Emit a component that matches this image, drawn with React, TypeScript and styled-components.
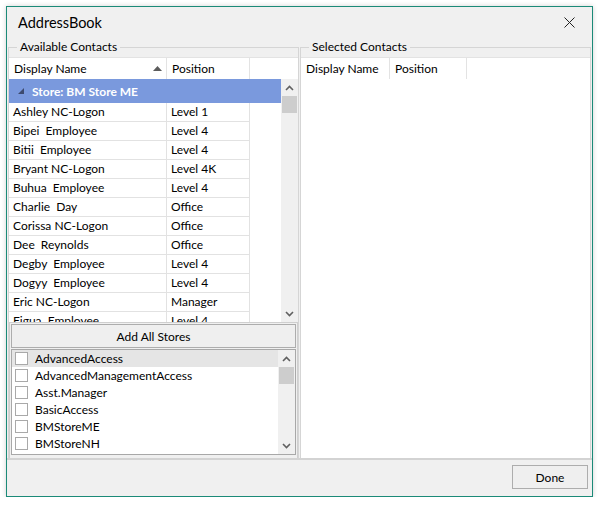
import React from "react";
import styled, { createGlobalStyle } from "styled-components";

const GlobalStyle = createGlobalStyle`
  html, body { margin: 0; padding: 0; background: #ffffff; }
  body {
    font-family: Lato, "Noto Sans", "Liberation Sans", sans-serif;
    font-size: 12px;
    color: #000;
  }
  * { box-sizing: border-box; }
`;

const Window = styled.div`
  margin: 6px 0 0 6px;
  width: 587px;
  height: 491px;
  border: 1px solid #1b8a78;
  background: #f0f0f0;
  display: flex;
  flex-direction: column;
  box-shadow: 0 0 5px rgba(0, 0, 0, 0.18);
`;

const TitleBar = styled.div`
  height: 31px;
  flex: none;
  display: flex;
  align-items: center;
  justify-content: space-between;
`;

const Title = styled.div`
  padding-left: 11px;
  font-size: 14.5px;
  color: #000;
`;

const CloseButton = styled.div`
  width: 46px;
  height: 31px;
  display: flex;
  align-items: center;
  justify-content: center;
`;

const Body = styled.div`
  flex: 1;
  display: flex;
  gap: 1px;
  padding: 0 1px 0 1px;
  min-height: 0;
`;

const Group = styled.fieldset`
  margin: 1px 0 0 0;
  padding: 0;
  width: 291px;
  border: 1px solid #d5d5d5;
  border-bottom: none;
  display: flex;
  flex-direction: column;
  min-width: 0;
`;

const Legend = styled.legend`
  margin-left: 8px;
  padding: 0 3px;
  font-size: 12px;
  line-height: 16px;
  color: #000;
`;

const GroupInner = styled.div`
  flex: 1;
  display: flex;
  flex-direction: column;
  padding-top: 2px;
  min-height: 0;
`;

const Header = styled.div<{ $cols: string }>`
  height: 22px;
  flex: none;
  display: grid;
  grid-template-columns: ${(p) => p.$cols};
  border-top: 1px solid #e3e3e3;
  background: #fff;
`;

const HeaderCell = styled.div`
  display: flex;
  align-items: center;
  justify-content: space-between;
  padding: 0 4px 0 5px;
  border-right: 1px solid #e3e3e3;
  white-space: nowrap;
  overflow: hidden;
  &:last-child { border-right: none; }
`;

const ListBox = styled.div`
  height: 243px;
  flex: none;
  display: flex;
  background: #fff;
`;

const Rows = styled.div`
  flex: 1;
  overflow: hidden;
  display: flex;
  flex-direction: column;
`;

const GroupRow = styled.div`
  height: 24px;
  flex: none;
  background: #7a99dd;
  display: flex;
  align-items: center;
  padding-left: 9px;
  gap: 8px;
  color: #fff;
  font-weight: bold;
`;

const Row = styled.div`
  height: 19px;
  flex: none;
  display: grid;
  grid-template-columns: 158px 83px 1fr;
`;

const Cell = styled.div`
  border-right: 1px solid #e2e2e2;
  border-bottom: 1px solid #e2e2e2;
  padding-left: 4px;
  line-height: 18px;
  white-space: pre;
  overflow: hidden;
`;

const Empty = styled.div``;

const ScrollBar = styled.div`
  width: 17px;
  flex: none;
  background: #f0f0f0;
  display: flex;
  flex-direction: column;
`;

const ScrollBtn = styled.div`
  height: 17px;
  flex: none;
  display: flex;
  align-items: center;
  justify-content: center;
`;

const Thumb = styled.div`
  height: 17px;
  flex: none;
  margin: 0 1px;
  background: #cdcdcd;
`;

const Track = styled.div`
  flex: 1;
`;

const BottomPanel = styled.div`
  flex: 1;
  border: 1px solid #cfcfcf;
  border-bottom: none;
  padding: 1px 1px 0 1px;
  display: flex;
  flex-direction: column;
  gap: 1px;
  min-height: 0;
`;

const PushButton = styled.button`
  height: 24px;
  flex: none;
  border: 1px solid #adadad;
  background: #efefef;
  font-family: inherit;
  font-size: 12px;
  color: #000;
  padding: 0;
`;

const CheckList = styled.div`
  height: 106px;
  flex: none;
  border: 1px solid #a8a8a8;
  background: #fff;
  display: flex;
`;

const CheckItem = styled.div<{ $hot?: boolean }>`
  height: 17px;
  flex: none;
  display: flex;
  align-items: center;
  gap: 7px;
  padding-left: 3px;
  background: ${(p) => (p.$hot ? "#e5e5e5" : "transparent")};
  white-space: nowrap;
`;

const Box = styled.span`
  width: 13px;
  height: 13px;
  flex: none;
  border: 1px solid #a9a9a9;
  background: #fff;
`;

const RightBody = styled.div`
  flex: 1;
  background: #fff;
`;

const Footer = styled.div`
  height: 38px;
  flex: none;
  border-top: 2px solid #d3d3d3;
  display: flex;
  justify-content: flex-end;
  align-items: flex-start;
  padding: 5px 4px 0 0;
`;

const DoneButton = styled(PushButton)`
  width: 76px;
`;

const Chevron = ({ up }: { up?: boolean }) => (
  <svg width="9" height="6" viewBox="0 0 9 6">
    <path
      d={up ? "M1 5 L4.5 1.5 L8 5" : "M1 1 L4.5 4.5 L8 1"}
      fill="none"
      stroke="#606060"
      strokeWidth="1.6"
    />
  </svg>
);

const contacts: [string, string][] = [
  ["Ashley NC-Logon", "Level 1"],
  ["Bipei  Employee", "Level 4"],
  ["Bitii  Employee", "Level 4"],
  ["Bryant NC-Logon", "Level 4K"],
  ["Buhua  Employee", "Level 4"],
  ["Charlie  Day", "Office"],
  ["Corissa NC-Logon", "Office"],
  ["Dee  Reynolds", "Office"],
  ["Degby  Employee", "Level 4"],
  ["Dogyy  Employee", "Level 4"],
  ["Eric NC-Logon", "Manager"],
  ["Figua  Employee", "Level 4"],
];

const stores = [
  "AdvancedAccess",
  "AdvancedManagementAccess",
  "Asst.Manager",
  "BasicAccess",
  "BMStoreME",
  "BMStoreNH",
  "BMStoreVT",
];

function VScroll() {
  return (
    <ScrollBar>
      <ScrollBtn>
        <Chevron up />
      </ScrollBtn>
      <Thumb />
      <Track />
      <ScrollBtn>
        <Chevron />
      </ScrollBtn>
    </ScrollBar>
  );
}

export default function App() {
  return (
    <>
      <GlobalStyle />
      <Window>
        <TitleBar>
          <Title>AddressBook</Title>
          <CloseButton>
            <svg width="11" height="11" viewBox="0 0 11 11">
              <path d="M0.5 0.5 L10.5 10.5 M10.5 0.5 L0.5 10.5" stroke="#222" strokeWidth="1" />
            </svg>
          </CloseButton>
        </TitleBar>
        <Body>
          <Group>
            <Legend>Available Contacts</Legend>
            <GroupInner>
              <Header $cols="158px 83px 1fr">
                <HeaderCell>
                  <span>Display Name</span>
                  <svg width="9" height="5" viewBox="0 0 9 5">
                    <path d="M0 5 L4.5 0 L9 5 Z" fill="#5c5c5c" />
                  </svg>
                </HeaderCell>
                <HeaderCell>Position</HeaderCell>
                <HeaderCell />
              </Header>
              <ListBox>
                <Rows>
                  <GroupRow>
                    <svg width="6" height="6" viewBox="0 0 6 6">
                      <path d="M6 0 L6 6 L0 6 Z" fill="#3d4a6e" />
                    </svg>
                    <span>Store: BM Store ME</span>
                  </GroupRow>
                  {contacts.map(([name, pos]) => (
                    <Row key={name}>
                      <Cell>{name}</Cell>
                      <Cell>{pos}</Cell>
                      <Empty />
                    </Row>
                  ))}
                </Rows>
                <VScroll />
              </ListBox>
              <BottomPanel>
                <PushButton>Add All Stores</PushButton>
                <CheckList>
                  <Rows>
                    {stores.map((s, i) => (
                      <CheckItem key={s} $hot={i === 0}>
                        <Box />
                        <span>{s}</span>
                      </CheckItem>
                    ))}
                  </Rows>
                  <VScroll />
                </CheckList>
              </BottomPanel>
            </GroupInner>
          </Group>
          <Group>
            <Legend>Selected Contacts</Legend>
            <GroupInner>
              <Header $cols="89px 77px 1fr">
                <HeaderCell>Display Name</HeaderCell>
                <HeaderCell>Position</HeaderCell>
                <HeaderCell />
              </Header>
              <RightBody />
            </GroupInner>
          </Group>
        </Body>
        <Footer>
          <DoneButton>Done</DoneButton>
        </Footer>
      </Window>
    </>
  );
}
